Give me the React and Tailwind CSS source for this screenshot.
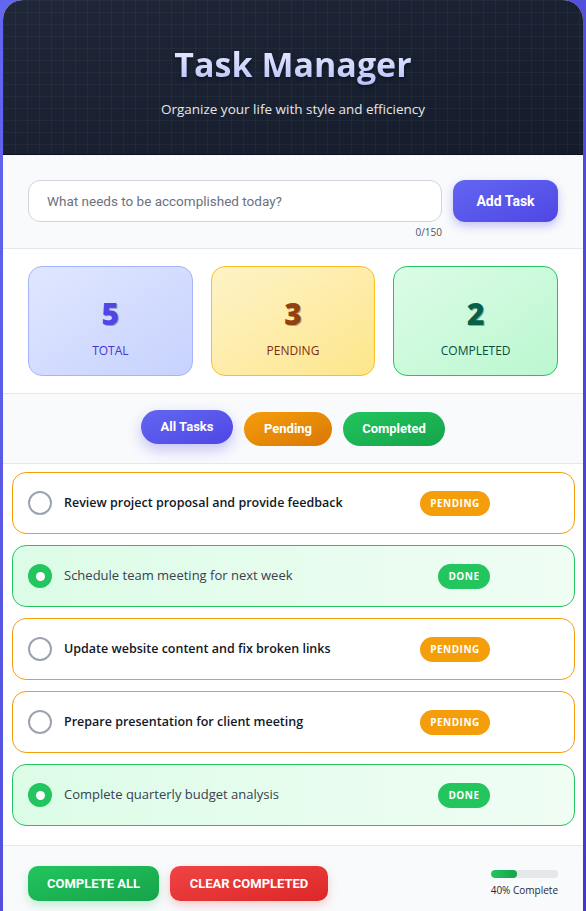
import React from "react";

const tasks = [
  { text: "Review project proposal and provide feedback", done: false },
  { text: "Schedule team meeting for next week", done: true },
  { text: "Update website content and fix broken links", done: false },
  { text: "Prepare presentation for client meeting", done: false },
  { text: "Complete quarterly budget analysis", done: true },
];

const sans = "font-['Segoe_UI','Open_Sans','Noto_Sans',sans-serif]";
const btn = "font-['Roboto','Liberation_Sans',sans-serif]";

function TaskItem({ t }) {
  return (
    <div
      className={
        "flex items-center h-[62px] rounded-[14px] border pl-[15px] pr-[16px] " +
        (t.done
          ? "border-[#22c55e] bg-gradient-to-r from-[#dcfce7] to-[#f0fdf4]"
          : "border-[#f59e0b] bg-white")
      }
    >
      {t.done ? (
        <div className="w-[24px] h-[24px] rounded-full bg-[#22c55e] flex items-center justify-center shrink-0">
          <div className="w-[9px] h-[9px] rounded-full bg-white" />
        </div>
      ) : (
        <div className="w-[24px] h-[24px] rounded-full border-2 border-[#9ca3af] bg-white shrink-0" />
      )}
      <div
        className={
          "ml-[12px] flex-1 " +
          sans +
          (t.done ? " text-[13px] text-[#374151]" : " text-[12.5px] text-[#111827] font-semibold")
        }
      >
        {t.text}
      </div>
      <div
        className={
          "h-[25px] rounded-full flex items-center justify-center text-white text-[10px] font-bold tracking-[0.5px] " +
          sans +
          (t.done ? " bg-[#22c55e] w-[52px]" : " bg-[#f59e0b] w-[70px]")
        }
      >
        {t.done ? "DONE" : "PENDING"}
      </div>
      <div className="w-[56px] ml-[12px] shrink-0" />
    </div>
  );
}

export default function App() {
  return (
    <div className="min-h-[911px] bg-gradient-to-br from-[#6366f1] to-[#4338ca] px-[3px]">
      <div className="bg-white rounded-t-[20px] overflow-hidden">
        {/* Header */}
        <div className="relative h-[155px] border-b border-[#0b1120] bg-gradient-to-br from-[#1f2738] to-[#141b2b]">
          <div className="absolute inset-0 bg-[linear-gradient(rgba(255,255,255,0.035)_1px,transparent_1px),linear-gradient(90deg,rgba(255,255,255,0.035)_1px,transparent_1px)] bg-[size:12px_12px]" />
          <div className="relative flex flex-col items-center pt-[40px]">
            <h1
              className={
                "text-[34px] leading-[48px] font-bold bg-gradient-to-b from-[#f1f3ff] to-[#b4bdfb] bg-clip-text text-transparent drop-shadow-[0_2px_2px_rgba(0,0,0,0.5)] " +
                sans
              }
            >
              Task Manager
            </h1>
            <p className={"mt-[9px] text-[13.5px] leading-[24px] text-[#e5e7eb] " + sans}>
              Organize your life with style and efficiency
            </p>
          </div>
        </div>

        {/* Input */}
        <div className="bg-[#f8fafc] border-b border-[#e5e7eb] pt-[25px] pb-[9px] px-[25px]">
          <div className="flex gap-[11px]">
            <div className="flex-1 flex flex-col">
              <input
                className={
                  "h-[42px] w-full rounded-[12px] border border-[#d1d5db] bg-white px-[18px] text-[13.5px] text-[#374151] placeholder:text-[#6b7280] outline-none " +
                  btn
                }
                placeholder="What needs to be accomplished today?"
              />
              <div className={"mt-[3px] text-right text-[10px] leading-[14px] text-[#4b5563] " + sans}>
                0/150
              </div>
            </div>
            <button
              className={
                "h-[42px] w-[105px] rounded-[12px] bg-gradient-to-br from-[#6366f1] to-[#4f46e5] text-white text-[14px] font-bold shadow-[0_4px_10px_rgba(79,70,229,0.3)] " +
                btn
              }
            >
              Add Task
            </button>
          </div>
        </div>

        {/* Stats */}
        <div className="bg-white border-b border-[#e5e7eb] pt-[17px] pb-[17px] px-[25px]">
          <div className="grid grid-cols-3 gap-[18px]">
            <div className="h-[110px] rounded-[14px] border border-[#a5b4fc] bg-gradient-to-br from-[#e0e7ff] to-[#c7d2fe] flex flex-col items-center pt-[29px]">
              <div className={"text-[30px] leading-[36px] font-extrabold text-[#4f46e5] [text-shadow:1px_1px_0_rgba(30,27,75,0.35)] " + sans}>5</div>
              <div className={"mt-[11px] text-[12px] leading-[16px] text-[#4338ca] " + sans}>TOTAL</div>
            </div>
            <div className="h-[110px] rounded-[14px] border border-[#fbbf24] bg-gradient-to-br from-[#fef3c7] to-[#fde68a] flex flex-col items-center pt-[29px]">
              <div className={"text-[30px] leading-[36px] font-extrabold text-[#92400e] [text-shadow:1px_1px_0_rgba(69,26,3,0.35)] " + sans}>3</div>
              <div className={"mt-[11px] text-[12px] leading-[16px] text-[#7c2d12] " + sans}>PENDING</div>
            </div>
            <div className="h-[110px] rounded-[14px] border border-[#22c55e] bg-gradient-to-br from-[#dcfce7] to-[#bbf7d0] flex flex-col items-center pt-[29px]">
              <div className={"text-[30px] leading-[36px] font-extrabold text-[#065f46] [text-shadow:1px_1px_0_rgba(2,44,34,0.35)] " + sans}>2</div>
              <div className={"mt-[11px] text-[12px] leading-[16px] text-[#064e3b] " + sans}>COMPLETED</div>
            </div>
          </div>
        </div>

        {/* Filters */}
        <div className="bg-[#f8fafc] border-b border-[#e5e7eb] h-[70px] flex items-center justify-center gap-[11px]">
          <button
            className={
              "h-[34px] w-[92px] -translate-y-[2px] rounded-full bg-gradient-to-br from-[#6366f1] to-[#4f46e5] text-white text-[13px] font-bold shadow-[0_6px_14px_rgba(79,70,229,0.3)] " +
              btn
            }
          >
            All Tasks
          </button>
          <button
            className={
              "h-[34px] w-[88px] rounded-full bg-gradient-to-br from-[#f59e0b] to-[#d97706] text-white text-[13px] font-bold " +
              btn
            }
          >
            Pending
          </button>
          <button
            className={
              "h-[34px] w-[102px] rounded-full bg-gradient-to-br from-[#22c55e] to-[#16a34a] text-white text-[13px] font-bold " +
              btn
            }
          >
            Completed
          </button>
        </div>

        {/* Tasks */}
        <div className="bg-white border-b border-[#e5e7eb] pt-[8px] pb-[19px] pl-[9px] pr-[8px] flex flex-col gap-[11px]">
          {tasks.map((t, i) => (
            <TaskItem key={i} t={t} />
          ))}
        </div>

        {/* Footer */}
        <div className="bg-[#f8fafc] pt-[20px] pb-[20px] px-[25px] flex items-start">
          <button
            className={
              "h-[35px] w-[131px] rounded-[10px] bg-gradient-to-br from-[#22c55e] to-[#16a34a] text-white text-[13px] font-bold shadow-[0_4px_10px_rgba(34,197,94,0.25)] " +
              btn
            }
          >
            COMPLETE ALL
          </button>
          <button
            className={
              "ml-[11px] h-[35px] w-[158px] rounded-[10px] bg-gradient-to-br from-[#ef4444] to-[#dc2626] text-white text-[13px] font-bold shadow-[0_4px_10px_rgba(239,68,68,0.25)] " +
              btn
            }
          >
            CLEAR COMPLETED
          </button>
          <div className="ml-auto flex flex-col items-start pt-[4px]">
            <div className="w-[67px] h-[8px] rounded-full bg-[#e5e7eb] overflow-hidden">
              <div className="h-full w-[40%] rounded-full bg-gradient-to-r from-[#22c55e] to-[#16a34a]" />
            </div>
            <div className={"mt-[5px] text-[10px] leading-[14px] text-[#1f2937] " + sans}>40% Complete</div>
          </div>
        </div>
      </div>
    </div>
  );
}
